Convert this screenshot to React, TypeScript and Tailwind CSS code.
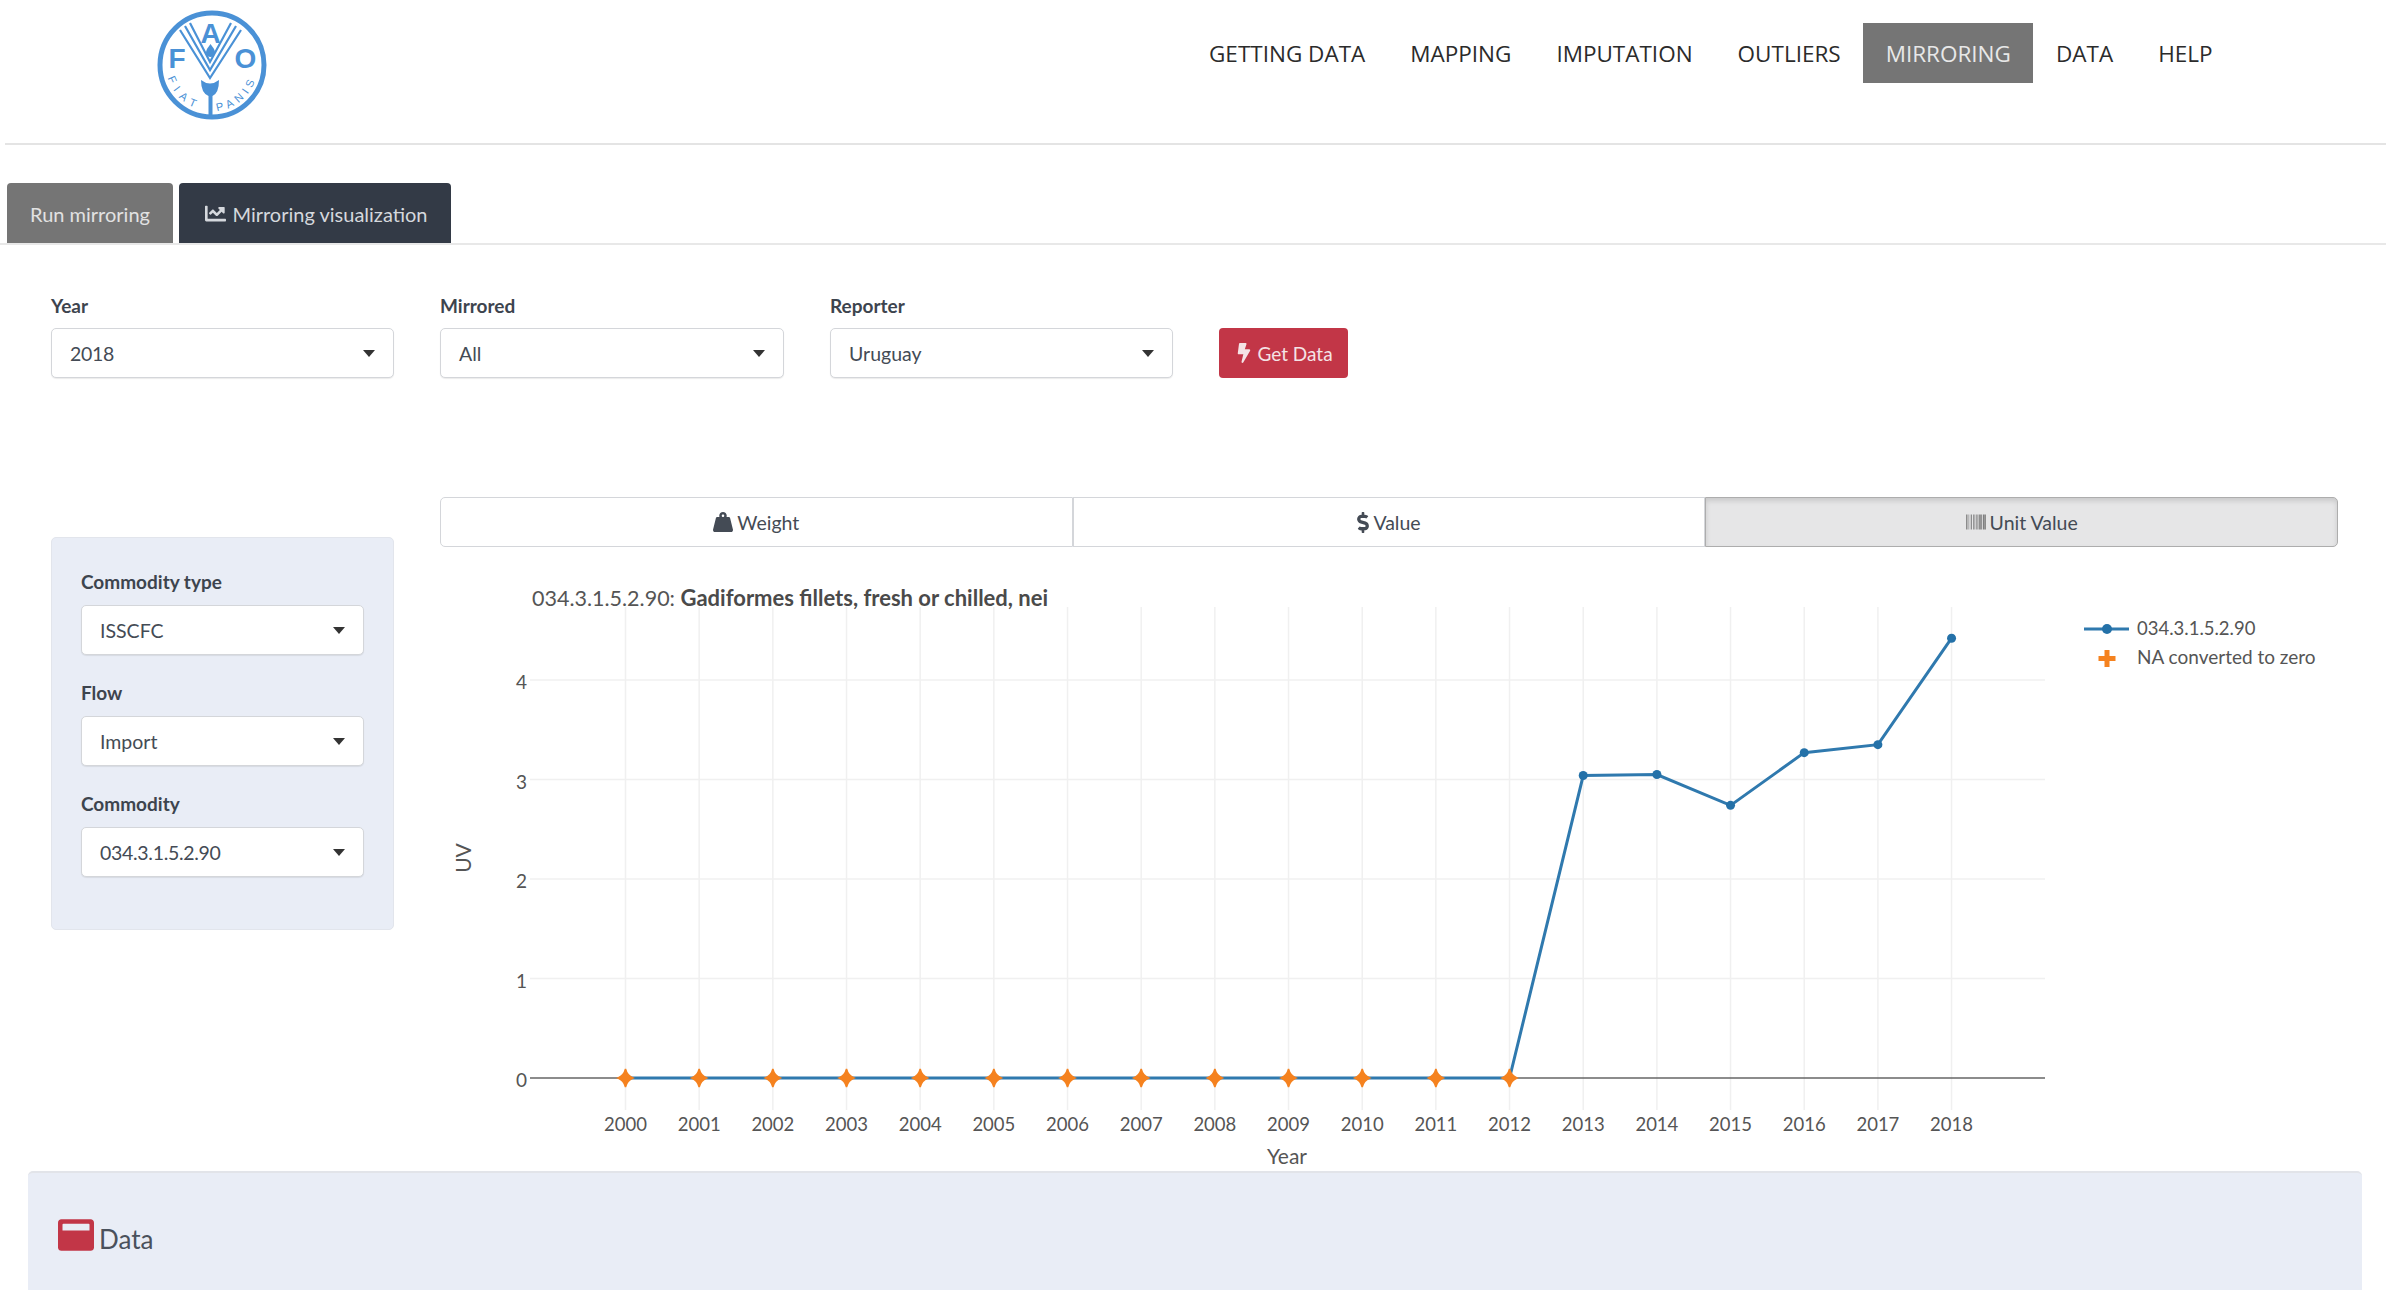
import { ReactNode } from 'react';
import { FaBarcode, FaBolt, FaChartLine, FaDollarSign, FaWeightHanging, FaWindowMaximize } from 'react-icons/fa';

const navItems = ['GETTING DATA', 'MAPPING', 'IMPUTATION', 'OUTLIERS', 'MIRRORING', 'DATA', 'HELP'];
const years = Array.from({ length: 19 }, (_, i) => 2000 + i);
const values = [0, 0, 0, 0, 0, 0, 0, 0, 0, 0, 0, 0, 0, 3.04, 3.05, 2.74, 3.27, 3.35, 4.42];

const xOf = (i: number) => 625.5 + i * 73.67;
const yOf = (v: number) => 1078 - v * 99.5;

function Caret() {
  return (
    <svg width="12" height="7" viewBox="0 0 12 7" className="shrink-0">
      <path d="M0 0h12L6 7z" fill="#333" />
    </svg>
  );
}

function Select({ value, numeric }: { value: string; numeric?: boolean }) {
  return (
    <div className="w-full h-[50px] bg-white border border-[#d4d6da] rounded-[5px] shadow-[0_1px_1px_rgba(0,0,0,0.08)] pl-[18px] pr-[18px] flex items-center justify-between text-[19.5px] text-[#444b55]">
      <span className={`pt-[2px] ${numeric ? 'tracking-[-0.3px]' : ''}`}>{value}</span>
      <Caret />
    </div>
  );
}

function Field({ label, value, numeric, width }: { label: string; value: string; numeric?: boolean; width: string }) {
  return (
    <div className={width}>
      <div className="h-[36px] pt-[1px] text-[19px] leading-[26px] font-bold text-[#3d444e]">{label}</div>
      <Select value={value} numeric={numeric} />
    </div>
  );
}

function SideField({ label, value, numeric }: { label: string; value: string; numeric?: boolean }) {
  return (
    <div className="h-[111px]">
      <div className="h-[38px] pt-[2px] text-[19px] leading-[26px] font-bold text-[#3d444e]">{label}</div>
      <Select value={value} numeric={numeric} />
    </div>
  );
}

function ToggleButton({ icon, label, active }: { icon: ReactNode; label: string; active?: boolean }) {
  return (
    <div className={`flex-1 h-[50px] flex items-center justify-center gap-[4px] text-[19.5px] border ${active ? 'bg-[#e6e6e7] border-[#adadad] rounded-r-[5px] shadow-[inset_0_3px_5px_rgba(0,0,0,0.125)]' : 'bg-white border-[#d4d6da] first:rounded-l-[5px]'} text-[#444b55]`}>
      {icon}
      <span className="pt-[1px]">{label}</span>
    </div>
  );
}

function FaoLogo() {
  const c = '#4a91d6';
  const font = "'Liberation Sans', sans-serif";
  return (
    <svg width="110" height="110" viewBox="0 0 110 110">
      <circle cx="55" cy="55" r="52" fill="#fff" stroke={c} strokeWidth="5" />
      <text x="53.500" y="33" textAnchor="middle" fontSize="28" fontWeight="700" fill={c} fontFamily={font}>A</text>
      <text x="20" y="58" textAnchor="middle" fontSize="28" fontWeight="700" fill={c} fontFamily={font}>F</text>
      <text x="88.500" y="58" textAnchor="middle" fontSize="28" fontWeight="700" fill={c} fontFamily={font}>O</text>
      <g fill="none" stroke={c} strokeWidth="2.200">
        <path d="M23 20L53 68L84 20" />
        <path d="M28 16L53 60L79 16" />
        <path d="M33 13L53 52L74 13" />
      </g>
      <path d="M53.500 34c3 4 4.500 6 4.500 8.500a4.500 4.500 0 0 1-9 0c0-2.500 1.500-4.500 4.500-8.500z" fill={c} />
      <path d="M44 70Q53 77 62 70Q62 83 55.500 86L55.500 107H51.500L51.500 86Q44 83 44 70z" fill={c} />
      <defs>
        <path id="fiat" d="M11 68A46 46 0 0 0 50 101" />
        <path id="panis" d="M60 101A46 46 0 0 0 99 68" />
      </defs>
      <text fontSize="11" fill={c} letterSpacing="6" fontFamily={font}>
        <textPath href="#fiat">FIAT</textPath>
      </text>
      <text fontSize="11" fill={c} letterSpacing="4.500" fontFamily={font}>
        <textPath href="#panis">PANIS</textPath>
      </text>
    </svg>
  );
}

function Chart() {
  const linePts = values.map((v, i) => `${xOf(i)},${yOf(v)}`).join(' ');
  const star = (x: number, y: number) => `M${x} ${y - 9}Q${x + 1.500} ${y - 2.500} ${x + 7.500} ${y}Q${x + 1.500} ${y + 2.500} ${x} ${y + 9}Q${x - 1.500} ${y + 2.500} ${x - 7.500} ${y}Q${x - 1.500} ${y - 2.500} ${x} ${y - 9}z`;
  return (
    <svg width="1898" height="611" viewBox="440 560 1898 611" className="block" fontFamily="Lato, sans-serif">
      <g stroke="#f0f0f0" strokeWidth="1.500">
        {years.map((_, i) => <line key={i} x1={xOf(i)} x2={xOf(i)} y1="607" y2="1110" />)}
        {[1, 2, 3, 4].map(v => <line key={v} x1="530" x2="2045" y1={yOf(v)} y2={yOf(v)} />)}
      </g>
      <line x1="530" x2="2045" y1="1078" y2="1078" stroke="#666" strokeWidth="1.500" />
      <polyline points={linePts} fill="none" stroke="#2f79ae" strokeWidth="3" />
      {values.map((v, i) => i > 12 && <circle key={i} cx={xOf(i)} cy={yOf(v)} r="4.500" fill="#2471a8" />)}
      {values.slice(0, 13).map((_, i) => <path key={i} d={star(xOf(i), 1078)} fill="#f5821f" stroke="#f5821f" strokeWidth="1.500" />)}
      <text x="532" y="606" fontSize="21.500" fill="#555">034.3.1.5.2.90: <tspan fontSize="22" fontWeight="700" fill="#4a4a4a">Gadiformes fillets, fresh or chilled, nei</tspan></text>
      <g fontSize="19" fill="#555" textAnchor="end">
        {[0, 1, 2, 3, 4].map(v => <text key={v} x="527" y={yOf(v) + 9}>{v}</text>)}
      </g>
      <g fontSize="18.500" fill="#555" textAnchor="middle">
        {years.map((y, i) => <text key={y} x={xOf(i)} y="1131">{y}</text>)}
      </g>
      <text x="1287" y="1164" fontSize="21" fill="#555" textAnchor="middle">Year</text>
      <text transform="translate(471 858) rotate(-90)" fontSize="21" fill="#555" textAnchor="middle">UV</text>
      <line x1="2084" x2="2129" y1="629" y2="629" stroke="#2f79ae" strokeWidth="3" />
      <circle cx="2107" cy="629" r="5" fill="#2471a8" />
      <path d="M2104.500 650h5v6h6v5h-6v6h-5v-6h-6v-5h6z" fill="#f5821f" />
      <text x="2137" y="635" fontSize="18.500" fill="#555">034.3.1.5.2.90</text>
      <text x="2137" y="664" fontSize="19" fill="#555">NA converted to zero</text>
    </svg>
  );
}

export default function App() {
  return (
    <div className="w-full h-[1290px] overflow-hidden bg-white font-['Lato',sans-serif]">
      <header className="ml-[5px] h-[145px] border-b-2 border-[#e4e4e4] flex justify-between pl-[152px] pr-[151px]">
        <div className="pt-[10px]"><FaoLogo /></div>
        <nav className="flex items-start pt-[23px] font-['Open_Sans',sans-serif] text-[22.5px] text-[#2b2b2b]">
          {navItems.map(item => (
            <div key={item} className={`h-[60px] px-[22.5px] pt-[1px] flex items-center ${item === 'MIRRORING' ? 'bg-[#757575] text-[#e8e8e8]' : ''}`}>{item}</div>
          ))}
        </nav>
      </header>

      <div className="h-[100px] border-b-2 border-[#e8e8e8] flex items-end pl-[7px] gap-[6px] text-[20px]">
        <div className="w-[166px] h-[60px] pt-[1px] rounded-t-[4px] bg-[#757575] text-[#e2e2e2] flex items-center justify-center">Run mirroring</div>
        <div className="w-[272px] h-[60px] pt-[1px] pl-[3px] rounded-t-[4px] bg-[#333a46] text-[#d5d8dd] flex items-center justify-center gap-[6px]">
          <FaChartLine size={21} />
          <span>Mirroring visualization</span>
        </div>
      </div>

      <div className="pl-[51px] pt-[47px] flex gap-[46px]">
        <Field label="Year" value="2018" numeric width="w-[343px]" />
        <Field label="Mirrored" value="All" width="w-[344px]" />
        <Field label="Reporter" value="Uruguay" width="w-[343px]" />
        <div className="pt-[36px]">
          <div className="w-[129px] h-[50px] rounded-[4px] bg-[#c23647] text-[#f4e3e5] flex items-center justify-center gap-[3px] text-[19px]">
            <FaBolt size={20} />
            <span className="pt-[2px]">Get Data</span>
          </div>
        </div>
      </div>

      <div className="pl-[51px] pt-[119px] flex gap-[46px]">
        <div className="pt-[40px]">
          <aside className="w-[343px] h-[393px] bg-[#e9edf6] rounded-[5px] border border-[#e2e5ec] pt-[29px] px-[29px]">
            <SideField label="Commodity type" value="ISSCFC" />
            <SideField label="Flow" value="Import" />
            <SideField label="Commodity" value="034.3.1.5.2.90" numeric />
          </aside>
        </div>
        <div className="w-[1898px]">
          <div className="flex">
            <ToggleButton icon={<FaWeightHanging size={20} />} label="Weight" />
            <ToggleButton icon={<FaDollarSign className="w-[12px] h-[21px]" />} label="Value" />
            <ToggleButton icon={<FaBarcode size={20} className="text-[#666]" />} label="Unit Value" active />
          </div>
          <div className="pt-[13px]">
            <Chart />
          </div>
        </div>
      </div>

      <section className="ml-[28px] w-[2334px] h-[200px] bg-[#e9edf6] rounded-t-[5px] border-t-2 border-[#e2e4e9] pl-[30px] pt-[44px] flex items-start gap-[5px] text-[#4a515c]">
        <FaWindowMaximize size={36} className="text-[#c23647]" />
        <span className="text-[26px] leading-[34px] pt-[5px]">Data</span>
      </section>
    </div>
  );
}
